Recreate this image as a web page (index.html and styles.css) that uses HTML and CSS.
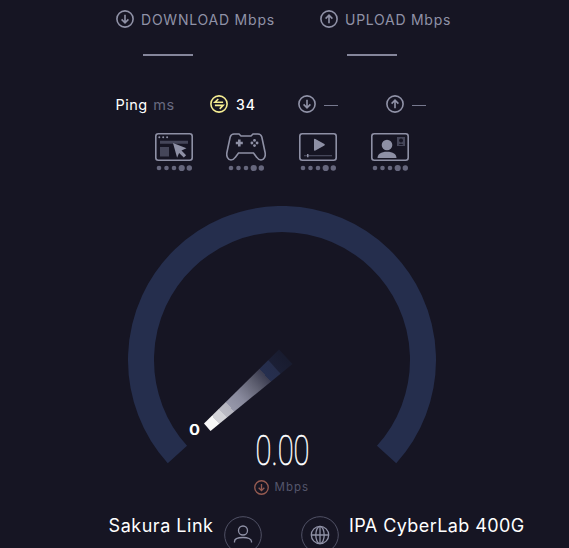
FILE: index.html
```html
<!DOCTYPE html>
<html lang="en">
<head>
<meta charset="utf-8">
<title>Speed test</title>
<link rel="stylesheet" href="styles.css">
</head>
<body>
<svg class="defs" width="0" height="0">
  <symbol id="down" viewBox="0 0 18 18"><circle cx="9" cy="9" r="8.1"/><path d="M9 4.7v8M5.6 9.4L9 12.8l3.4-3.4"/></symbol>
  <symbol id="up" viewBox="0 0 18 18"><circle cx="9" cy="9" r="8.1"/><path d="M9 13.3v-8M5.6 8.6L9 5.2l3.4 3.4"/></symbol>
  <symbol id="swap" viewBox="0 0 18 18"><circle cx="9" cy="9" r="8.1"/><path d="M8.3 4L4.9 7.3h8.2M4.9 10.4h8.2L9.7 13.9"/></symbol>
  <symbol id="dots" viewBox="0 0 38 8"><circle cx="4" cy="4" r="2.3"/><circle cx="11.5" cy="4" r="2.3"/><circle cx="19" cy="4" r="2.3"/><circle cx="26.7" cy="4" r="3.1"/><circle cx="34.3" cy="4" r="2.7"/></symbol>
</svg>
<main class="app">
  <header class="results">
    <section class="result">
      <div class="label"><svg class="icon"><use href="#down"/></svg><span class="download">DOWNLOAD Mbps</span></div>
      <div class="rule"></div>
    </section>
    <section class="result">
      <div class="label"><svg class="icon"><use href="#up"/></svg><span class="upload">UPLOAD Mbps</span></div>
      <div class="rule"></div>
    </section>
  </header>
  <section class="ping">
    <div class="ping-title">Ping <span>ms</span></div>
    <div class="metric idle"><svg class="icon"><use href="#swap"/></svg><b>34</b></div>
    <div class="metric"><svg class="icon"><use href="#down"/></svg><i></i></div>
    <div class="metric"><svg class="icon"><use href="#up"/></svg><i></i></div>
  </section>
  <section class="activities">
    <div class="activity">
      <svg class="picture" viewBox="0 0 40 28"><rect class="line" x="1.8" y=".8" width="36.4" height="26.4" rx="2.5"/><g class="fill"><circle cx="5.3" cy="4.3" r="1"/><circle cx="9.2" cy="4.3" r="1"/><circle cx="13.1" cy="4.3" r="1"/></g><path class="dim" d="M6 7.8h28v3H6zM6 14h9v9.5H6z"/><path class="fill" d="M19 10l13.5 5.3-5 2.3 4.6 4.7-2.3 2.3-4.7-4.7-2 4.9z"/></svg>
      <svg class="dots"><use href="#dots"/></svg>
    </div>
    <div class="activity">
      <svg class="picture" viewBox="0 0 40 28"><path class="line" d="M8 1h5l2 2h10l2-2h5c2 0 3.2 1 3.8 3l3.200 15c1 4.400-1 8-4 8-2 0-3-.8-4.200-2.600L27.500 20h-15l-3.300 4.400C8 26.200 7 27 5 27c-3 0-5-3.600-4-8L4.200 4C4.800 2 6 1 8 1z"/><path class="cross" d="M13.300 6.500v7M9.800 10h7"/><g class="fill"><circle cx="28.500" cy="7.400" r="1.400"/><circle cx="28.500" cy="12.600" r="1.400"/><circle cx="25.900" cy="10" r="1.400"/><circle cx="31.100" cy="10" r="1.400"/></g></svg>
      <svg class="dots"><use href="#dots"/></svg>
    </div>
    <div class="activity">
      <svg class="picture" viewBox="0 0 40 28"><rect class="line" x="1.800" y=".800" width="36.400" height="26.400" rx="2.500"/><path class="fill" d="M16 6.700q0-1.500 1.400-.7l9 5q1 .7 0 1.400l-9 5q-1.400.8-1.400-.7z"/><path class="dim" d="M6 22h28v1.300H6z"/><path class="fill" d="M9 21h1.500v3.300H9z"/></svg>
      <svg class="dots"><use href="#dots"/></svg>
    </div>
    <div class="activity">
      <svg class="picture" viewBox="0 0 40 28"><rect class="line" x="1.800" y=".800" width="36.400" height="26.400" rx="2.500"/><g class="fill"><circle cx="17" cy="12" r="5.300"/><path d="M7.500 25c0-4 3.500-6.300 9.500-6.300s9.500 2.300 9.500 6.300z"/></g><path class="dim" fill-rule="evenodd" d="M27 4h8v9h-8zM31 5.500a2 2 0 1 0 .1 0zM28.500 12q2.500-2.500 5 0z"/></svg>
      <svg class="dots"><use href="#dots"/></svg>
    </div>
  </section>
  <section class="gauge">
    <svg width="308" height="270" viewBox="0 0 308 270">
      <defs><linearGradient id="needle" gradientUnits="userSpaceOnUse" x1="79" y1="222" x2="159" y2="150">
        <stop offset="0" stop-color="#f8f8f8"/><stop offset=".11" stop-color="#f8f8f8"/><stop offset=".11" stop-color="#d3d3d8"/><stop offset=".2" stop-color="#d3d3d8"/><stop offset=".2" stop-color="#bcbcc5"/><stop offset=".29" stop-color="#b4b4bf"/><stop offset=".29" stop-color="#9798aa"/><stop offset=".42" stop-color="#88899c"/><stop offset=".6" stop-color="#5e5f70"/><stop offset=".73" stop-color="#3b3c50"/><stop offset=".73" stop-color="#262f4f"/><stop offset=".84" stop-color="#252d4b"/><stop offset=".85" stop-color="#1b1f35"/><stop offset="1" stop-color="#181b2e"/>
      </linearGradient></defs>
      <path class="track" d="M49.400 248.500A141 141 0 1 1 258.600 248.500"/>
      <path fill="url(#needle)" d="M76 217.500L151 143.500L164.500 158L82.500 225z"/>
      <text class="zero" x="61" y="229" textLength="11" lengthAdjust="spacingAndGlyphs">0</text>
      <text class="speed" x="127.500" y="258.500" textLength="54" lengthAdjust="spacingAndGlyphs">0.00</text>
    </svg>
    <div class="unit"><svg class="icon"><use href="#down"/></svg><span>Mbps</span></div>
  </section>
  <footer class="hosts">
    <div class="host provider">
      <div class="name">Sakura Link</div>
      <svg class="badge" viewBox="0 0 38 38"><circle class="ring" cx="19" cy="19" r="18.300"/><circle cx="19" cy="14.500" r="4.500"/><path d="M10.500 26.500v-1c0-2.500 3.500-4 8.500-4s8.500 1.500 8.500 4v1"/></svg>
    </div>
    <div class="host">
      <svg class="badge" viewBox="0 0 38 38"><circle class="ring" cx="19" cy="19" r="18.300"/><circle cx="19" cy="19" r="8.700"/><ellipse cx="19" cy="19" rx="4.200" ry="8.700"/><path d="M10.300 19h17.400M19 10.300v17.400"/></svg>
      <div>
        <div class="name server">IPA CyberLab 400G</div>
        <div class="city">Tokyo</div>
      </div>
    </div>
  </footer>
</main>
</body>
</html>
```
FILE: styles.css
```css
* { box-sizing: border-box; }
body { margin: 0; background: #161523; color: #fff; font-family: Inter, "Open Sans", sans-serif; }
.app { width: 569px; height: 548px; overflow: hidden; }
.defs { display: block; }
svg { display: block; flex: none; fill: none; stroke: currentColor; }
.icon { width: 18px; height: 18px; stroke-width: 1.6; }

.results { display: flex; height: 94px; padding: 10px 0 0 116px; color: #9092a7; }
.result { width: 204px; }
.label { display: flex; align-items: center; gap: 7px; height: 18px; font-size: 14px; white-space: nowrap; }
.download { letter-spacing: .78px; }
.upload { letter-spacing: .74px; }
.rule { width: 50px; height: 2px; margin: 26px 0 0 26.5px; background: #85869b; }

.ping { display: flex; align-items: center; height: 20px; padding-left: 115.500px; font-size: 14.500px; }
.ping-title { width: 94.500px; letter-spacing: .5px; white-space: nowrap; }
.ping-title span { color: #686a80; margin-left: 1px; }
.metric { display: flex; align-items: center; gap: 8px; width: 88px; color: #9092a7; }
.metric b { color: #fff; font-size: 14px; font-weight: 500; letter-spacing: 1px; }
.metric i { width: 14px; height: 1px; background: #77798f; margin-top: 2px; }
.idle .icon { color: #f5ed92; }

.activities { display: flex; gap: 32px; padding: 19px 0 0 154px; height: 62px; color: #8e90a5; }
.activity { width: 40px; }
.picture { width: 40px; height: 28px; stroke: none; }
.line { stroke: currentColor; stroke-width: 1.6; }
.fill { fill: currentColor; }
.dim { fill: #454659; }
.cross { stroke: currentColor; stroke-width: 2.6; }
.dots { width: 38px; height: 8px; margin: 3px 0 0 1px; fill: #66677d; stroke: none; }

.gauge { display: flex; flex-direction: column; padding: 30px 0 0 128px; height: 340px; }
.track { stroke: #252e4d; stroke-width: 26; }
.gauge > svg { stroke: none; }
.gauge text { fill: #fff; }
.zero { font-size: 14px; font-weight: 700; }
.gauge .speed { font-family: Roboto, sans-serif; font-size: 43px; font-weight: 100; stroke: #fff; stroke-width: .6; }
.unit { display: flex; align-items: center; gap: 6px; margin: 4px 0 0 125.500px; height: 14px; color: #55576c; font-size: 11.500px; letter-spacing: 1px; }
.unit .icon { width: 15px; height: 15px; color: #965b51; }

.hosts { display: flex; gap: 39.500px; height: 32px; }
.host { display: flex; gap: 10px; }
.provider { width: 261.500px; justify-content: flex-end; }
.name { height: 20px; line-height: 20px; font-size: 18px; letter-spacing: .52px; white-space: nowrap; }
.server { letter-spacing: .42px; }
.city { margin-top: 8px; line-height: 20px; font-size: 14px; color: #9092a7; }
.badge { width: 38px; height: 38px; color: #9092a7; stroke-width: 1.300; }
.ring { stroke: #505165; stroke-width: 1; }
```
